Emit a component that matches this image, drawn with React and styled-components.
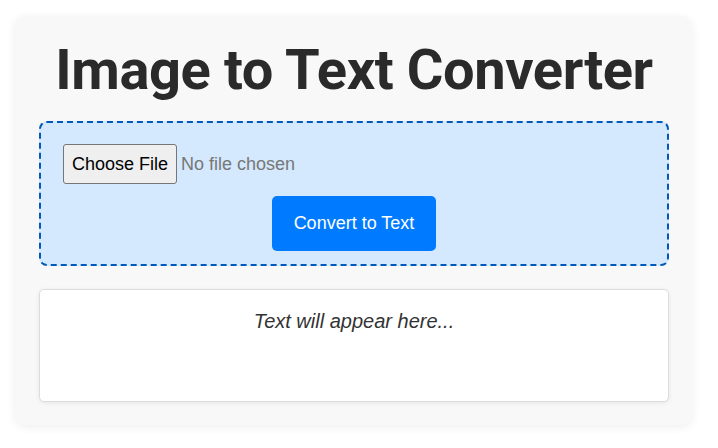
import React from 'react';
import styled, { createGlobalStyle } from 'styled-components';

const Global = createGlobalStyle`
  html, body {
    margin:0;
    padding:0;
    background:#fff;
    font-family:"Liberation Sans", Arial, sans-serif;
  }
`;

const Page = styled.div`
  padding:16px 26px 24px 15px;
`;

const Card = styled.main`
  background:#f8f8f8;
  border-radius:10px;
  box-shadow:0 2px 10px rgba(0,0,0,0.07);
  padding:20px 23px 23px 24px;
  display:flex;
  flex-direction:column;
`;

const Title = styled.h1`
  margin:0 0 17px;
  text-align:center;
  font-family:Roboto, "Liberation Sans", sans-serif;
  font-weight:700;
  font-size:56px;
  line-height:68px;
  letter-spacing:-0.4px;
  color:#2a2a2a;
`;

const Drop = styled.div`
  background:#d4e9fd;
  border:2px dashed #0058b8;
  border-radius:8px;
  padding:21px 22px 13px;
  display:flex;
  flex-direction:column;
  gap:12px;
`;

const FileInput = styled.input`
  font-family:"Liberation Sans", Arial, sans-serif;
  font-size:18px;
  color:#777;
  align-self:flex-start;

  &::file-selector-button {
    font-family:"Liberation Sans", Arial, sans-serif;
    font-size:18px;
    color:#000;
    background:#efefef;
    border:1px solid #767676;
    border-radius:3px;
    height:40px;
    padding:0 8px;
    margin-right:4px;
  }
`;

const Convert = styled.button`
  align-self:center;
  background:#007bff;
  color:#fff;
  border:none;
  border-radius:5px;
  height:55px;
  padding:0 22px;
  font-family:"Liberation Sans", Arial, sans-serif;
  font-size:18px;
  cursor:pointer;
`;

const Output = styled.div`
  margin-top:23px;
  background:#fff;
  border:1px solid #ddd;
  border-radius:5px;
  box-shadow:0 1px 4px rgba(0,0,0,0.08);
  min-height:113px;
  box-sizing:border-box;
  padding:20px;
  text-align:center;
`;

const Placeholder = styled.p`
  margin:0;
  font-style:italic;
  font-size:20px;
  color:#333;
`;

export default function App(){
  return (
    <Page>
      <Global/>
      <Card>
        <Title>Image to Text Converter</Title>
        <Drop>
          <FileInput type="file" accept="image/*"/>
          <Convert type="button">Convert to Text</Convert>
        </Drop>
        <Output>
          <Placeholder>Text will appear here...</Placeholder>
        </Output>
      </Card>
    </Page>
  );
}
